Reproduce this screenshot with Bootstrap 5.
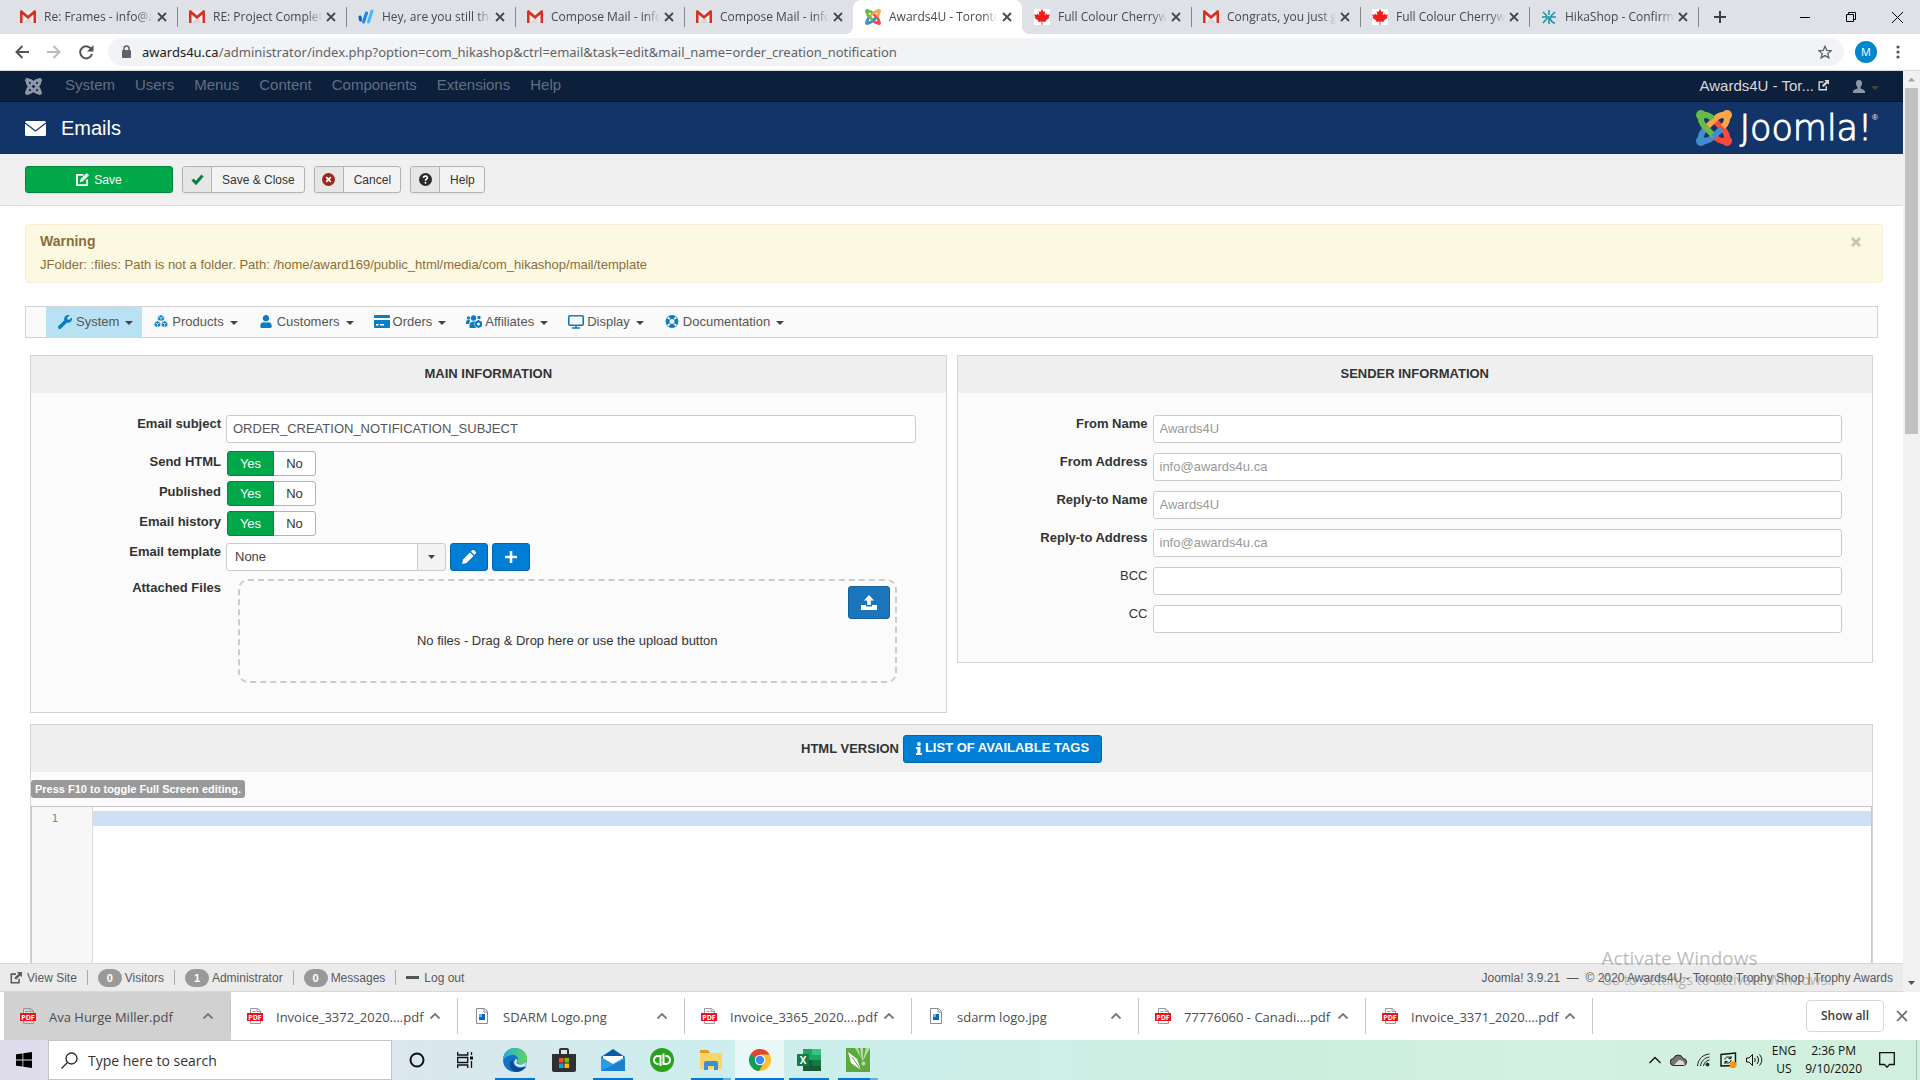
<!DOCTYPE html>
<html lang="en">
<head>
<meta charset="utf-8">
<meta name="viewport" content="width=device-width, initial-scale=1">
<title>Awards4U - Toronto Trophy Shop - Administration</title>
<link href="https://cdn.jsdelivr.net/npm/bootstrap@5.3.0/dist/css/bootstrap.min.css" rel="stylesheet">
<style>
body{height:100vh;font-family:"Liberation Sans",Arial,sans-serif;font-size:13px;line-height:18px;color:#333;background:#fff}
svg{display:block;flex:none}
a{text-decoration:none;color:inherit}
button{font-family:inherit}
.ui{font-family:"Open Sans","Noto Sans",sans-serif}
.plain{border:0;background:none;padding:0;color:inherit;display:flex;align-items:center;justify-content:center}
/* tab strip */
.tabstrip{height:34px;background:#dee1e6;padding-left:8px;font-size:12px;color:#45494d}
.tabitem{width:169px;height:34px;padding:0 8px 0 12px;position:relative}
.tabitem:not(.on):not(.pre)::after{content:"";position:absolute;right:-1px;top:7px;width:1px;height:20px;background:#84888c}
.tabitem.on{background:#fff;border-radius:8px 8px 0 0}
.tabitem.on::before,.tabitem.on::after{content:"";position:absolute;bottom:0;width:8px;height:8px}
.tabitem.on::before{left:-8px;background:radial-gradient(circle at 0 0,transparent 8px,#fff 8px)}
.tabitem.on::after{right:-8px;background:radial-gradient(circle at 100% 0,transparent 8px,#fff 8px)}
.tabname{margin-left:8px;flex:1;overflow:hidden;white-space:nowrap;line-height:34px;-webkit-mask-image:linear-gradient(90deg,#000 86%,transparent);mask-image:linear-gradient(90deg,#000 86%,transparent)}
.tabclose{width:14px;height:14px;margin-left:2px}
.wbtn{width:46px;height:30px;color:#000}
/* address bar */
.addrbar{height:37px;border-bottom:1px solid #d5d8dc;padding:0 11px 0 6px}
.navic{width:32px;height:32px}
.omni{height:28px;border-radius:14px;background:#f1f3f4;margin-left:6px;padding:0 12px;color:#5f6368}
.url{font-family:"Noto Sans","Open Sans",sans-serif;font-size:13px;line-height:28px;margin-left:10px}
.url b{font-weight:400;color:#202124}
.avatar{width:22px;height:22px;border-radius:50%;background:#0086d1;color:#fff;font-size:11px;margin:0 10px 0 11px}
.kebab{width:22px}
/* joomla bars */
.topbar{height:31px;background:#0c1f3b;border-bottom:1px solid #08162b;font-size:15px;color:#626f82;padding-left:25px;line-height:28px}
.topbar nav{margin-left:13px;padding-bottom:2px}
.topbar nav a{padding:0 10px}
.sitelink{color:#d9d9d9;padding-bottom:1px}
.hero{height:52px;background:#133468;color:#fff;padding:0 25px}
.hero h1{font-size:20px;line-height:28px;font-weight:400;margin:0 0 0 15px}
.brandtext{font-family:"DejaVu Sans",sans-serif;font-weight:200;font-size:35px;line-height:38px;-webkit-text-stroke:1px #fff}
.regmark{font-size:8px}
.subhead{height:52px;background:#f0f0f0;border-bottom:1px solid #dcdcdc;padding:12px 25px}
.jbtn{height:27px;border:1px solid #b3b3b3;border-radius:3px;background:#f3f3f3;color:#333;font-size:12px;line-height:26px;padding:0;display:flex;overflow:hidden;box-shadow:0 1px 2px rgba(0,0,0,.05)}
.jbtn i{width:29px;height:25px;background:#e6e6e6;border-right:1px solid #b3b3b3;display:flex;align-items:center;justify-content:center}
.jbtn span{padding:0 9px 0 10px}
.jsave{width:148px;background:#00a849;border-color:#008739;color:#fff;align-items:center;justify-content:center;gap:5px}
.page{padding:18px 20px 0 25px}
.jalert{background:#fcf9e2;border:1px solid #fbeed5;border-radius:4px;color:#8a6d3b;height:59px;padding:7px 20px 0 14px}
.jalert h4{font-size:14px;font-weight:700;line-height:18px;margin:0 0 6px}
.hkmenu{margin:23px 5px 0 0;height:32px;border:1px solid #d3d3d3;background:#fafafa;padding-left:20px;color:#555;line-height:28px}
.hkmenu a{display:flex;align-items:center;padding:0 9px 1px 11px;height:30px}
.hkmenu svg{color:#0b7dc1;margin-right:3px}
.hkmenu a.cur{background:#b9e1f4}
.hkmenu a::after,.car::after{content:"";border:4px solid transparent;border-top-color:#444;border-bottom:0;margin-left:6px;margin-top:3px}
.panels{padding:17px 10px 0 5px;gap:10px}
.hkpanel{border:1px solid #d3d3d3;background:#fbfbfb;border-radius:0;color:#333}
.hkpanel h2{background:#efefef;font-size:13px;font-weight:700;line-height:36px;height:37px;margin:0;text-align:center}
.fields{padding:22px 30px 29px 0}
.frow{display:flex;align-items:flex-start}
.flabel{width:190px;flex:none;text-align:right;font-weight:700;margin-right:5px;line-height:18px}
.fin{height:28px;flex:1;min-width:0;width:100%;border:1px solid #ccc;border-radius:3px;background:#fff;padding:0 6px 2px;font-size:13px;color:#555;line-height:18px}
.fin::placeholder{color:#999}
.yn{margin-left:1px}
.yn label.btn{font-size:13px;line-height:23px;height:25px;padding:0;border:1px solid #b3b3b3;background:#fff;color:#333;width:43px;border-radius:3px}
.yn .btn-check:checked+label.btn{background:#00a849;border-color:#008739;color:#fff;width:47px}
.fsel{width:220px;height:28px;appearance:none;border:1px solid #ccc;border-radius:3px;padding:0 8px;color:#444;font-size:13px;background:#fff url("data:image/svg+xml,%3Csvg xmlns='http://www.w3.org/2000/svg' width='28' height='26'%3E%3Crect width='28' height='26' fill='%23f3f3f3'/%3E%3Crect width='1' height='26' fill='%23ccc'/%3E%3Cpath d='M11 11h7l-3.500 4z' fill='%23444'/%3E%3C/svg%3E") right center no-repeat}
.bluebtn{background:#007dd4;border:1px solid #0067ae;border-radius:3px;color:#fff;height:28px;width:38px;padding:0;display:flex;align-items:center;justify-content:center}
.bluebtn.tags{width:199px;display:inline-flex;font-size:13px;font-weight:700;gap:3px;vertical-align:middle;padding-bottom:1px}
.dropz{flex:1;margin:0 19px 0 12px;height:104px;border:2px dashed #ccc;border-radius:10px;padding:5px;text-align:center}
.dropz p{margin:13px 0 0}
.upbtn{background:#1b75bb;border-color:#16619b;width:42px;height:33px;margin-left:auto}
.key{background:#999;color:#fff;font-weight:700;font-size:11px;line-height:18px;padding:0 4px;border-radius:3px}
.editor{border:1px solid #c8c8c8;border-bottom:0;background:#fff;font-family:"DejaVu Sans Mono",monospace;font-size:11px}
.gutter{width:61px;background:#f7f7f7;border-right:1px solid #ddd;color:#888;padding:4px 34px 0 0;text-align:right;line-height:16px}
.curline{height:15px;background:#cfdff5;margin-top:4px}
.statusbar{height:29px;background:#ebebeb;border:1px solid #d8d8d8;border-width:1px 0;font-size:12px;color:#5a5a5a;padding:0 10px}
.statusbar svg{margin-right:5px}
.statusbar .sep{width:1px;height:15px;background:#aaa;margin:0 10px}
.cnt{background:#999;color:#fff;font-weight:700;font-size:11px;width:24px;height:18px;line-height:18px;border-radius:9px;text-align:center;margin-right:3px}
.scrollb{width:17px;background:#f1f1f1}
.thumb{width:13px;height:346px;background:#c1c1c1}
/* downloads + taskbar */
.dlbar{height:48px;padding-left:4px;background:#fff}
.dl{width:227px;height:48px;padding:0 17px 0 16px;position:relative;color:#4a4d51;font-size:13px}
.dl::after{content:"";position:absolute;right:0;top:6px;width:1px;height:36px;background:#c3c6c9}
.dl.hot{background:#d1d1d1}
.dl a{margin-left:13px;padding-top:2px;flex:1;white-space:nowrap}
.showall{width:78px;height:32px;border:1px solid #d6d9dc;border-radius:4px;background:#fff;font-size:12px;color:#3c4043;font-weight:600;padding:0}
.taskbar{height:40px;background:linear-gradient(90deg,#dfdcec 0,#dce6ee 20%,#cceeed 38%,#cdefe6 55%,#cdeedd 68%,#d3f1e1 80%,#d1efdd 100%)}
.startbtn{width:48px}
.search{width:344px;border:1px solid #c4c4c4;background:#fff;padding-left:12px}
.search input{border:0;outline:0;font-size:14px;margin-left:10px;width:240px;padding:1px 0 0}
.search input::placeholder{color:#333;opacity:1}
.app{width:49px;height:40px;display:flex;align-items:center;justify-content:center;position:relative}
.app.run::after{content:"";position:absolute;bottom:0;left:5px;right:4px;height:2px;background:#0078d7}
.app.two::after{background:linear-gradient(90deg,#0078d7 80%,#66aee6 80%)}
.app.act{background:#e9f8f7}.app.act::after{left:0;right:0}
.tray{color:#111;font-size:12px;line-height:18px;text-align:center;gap:9px}
.deskedge{width:4px;height:40px;border-left:1px solid #a9bfb3;margin-left:11px}
.watermark{position:absolute;right:89px;bottom:90px;color:rgba(120,120,120,.5);z-index:5;pointer-events:none;white-space:nowrap}
.watermark p{margin:0}
.watermark .w1{font-size:19px;line-height:24px}.watermark .w2{font-size:14px;line-height:20px}
</style>
</head>
<body class="d-flex flex-column overflow-hidden position-relative">
<svg width="0" height="0" class="position-absolute">
<defs>
<symbol id="gm" viewBox="0 0 16 14"><path fill="#eee" d="M1 1h14v12H1z"/><path fill="#d9d9d9" d="M3 13l5-5 5 5z"/><path fill="#d93025" d="M0 1.500A1.500 1.500 0 0 1 1.500 0L8 5.500 14.500 0A1.500 1.500 0 0 1 16 1.500V13h-2.500V4.500L8 9 2.500 4.500V13H0z"/></symbol>
<symbol id="leaf" viewBox="0 0 16 16"><path fill="#fff" d="M0 0h16v16H0z"/><path fill="#f11c1c" d="M8 0l1.600 3 1.700-.8-.6 4 2-1.700.4 1.200L16 5.500l-1.200 2.600.8.700-4 3 .3 1.300-3.500-.5V16h-.8v-3.400l-3.500.5.3-1.300-4-3 .8-.7L0 5.500l2.900.2.4-1.200 2 1.700-.6-4 1.700.8z"/></symbol>
<symbol id="arm" viewBox="0 0 36 36"><circle cx="5" cy="5" r="5" fill="currentColor" stroke="none"/><path d="M5 5C11 4 14 6 17 9M5 5C4 11 6 14 9 17L18 26" fill="none" stroke="currentColor" stroke-width="6"/></symbol>
<symbol id="joo" viewBox="0 0 36 36"><use href="#arm" color="#418ece" transform="rotate(270 18 18)"/><use href="#arm" color="#f9493a" transform="rotate(180 18 18)"/><use href="#arm" color="#fba546" transform="rotate(90 18 18)"/><use href="#arm" color="#67bb46"/><path d="M26 19L17 27" stroke="#418ece" stroke-width="5.500"/></symbol>
<symbol id="joog" viewBox="0 0 36 36"><use href="#arm"/><use href="#arm" transform="rotate(90 18 18)"/><use href="#arm" transform="rotate(180 18 18)"/><use href="#arm" transform="rotate(270 18 18)"/></symbol>
<symbol id="x" viewBox="0 0 12 12"><path d="M2 2l8 8M10 2l-8 8" stroke="currentColor" stroke-width="1.800" fill="none"/></symbol>
<symbol id="up" viewBox="0 0 12 12"><path d="M1.500 8.500L6 4l4.500 4.500" stroke="currentColor" stroke-width="1.800" fill="none"/></symbol>
<symbol id="ext" viewBox="0 0 14 14"><path d="M7 2.500H1.500v10h9V8" fill="none" stroke="currentColor" stroke-width="1.800"/><path d="M8 0h6v6l-2-2-5 5-2-2 5-5z" fill="currentColor"/></symbol>
<symbol id="usr" viewBox="0 0 448 512"><path fill="currentColor" d="M224 256c70.700 0 128-57.300 128-128S294.700 0 224 0 96 57.300 96 128s57.300 128 128 128zm89.600 32h-16.700c-22.200 10.200-46.900 16-72.900 16s-50.600-5.800-72.900-16h-16.700C60.200 288 0 348.200 0 422.400V464c0 26.500 21.500 48 48 48h352c26.500 0 48-21.500 48-48v-41.600c0-74.200-60.200-134.400-134.400-134.400z"/></symbol>
<symbol id="pdf" viewBox="0 0 16 16"><path d="M3.500 8V.5h7L13.500 3v5M3.500 12v3.500h10V12M10 .5V3.500h3M5.500 3.500h3" fill="none" stroke="#999"/><path fill="#e5131d" d="M0 5h16v8H0z"/><text x="8" y="11.500" font-size="7" font-weight="700" font-family="Open Sans,sans-serif" fill="#fff" text-anchor="middle">PDF</text></symbol>
<symbol id="img" viewBox="0 0 16 16"><path d="M2.500.5h8l3 3v12h-11z" fill="#fff" stroke="#8b8b8b"/><path d="M10 .5v3.500h3.500" fill="none" stroke="#8b8b8b"/><path fill="#0a67c2" d="M5 6h6v6H5z"/><path fill="#5ab6f0" d="M5 6h3v3H5z"/></symbol>
</defs></svg>

<header class="ui flex-shrink-0">
<div class="tabstrip d-flex align-items-center">
<div class="tabitem d-flex align-items-center"><svg width="16" height="14"><use href="#gm"/></svg><a href="#" class="tabname">Re: Frames - info@aw</a><button class="plain tabclose" aria-label="Close tab"><svg width="12" height="12"><use href="#x"/></svg></button></div>
<div class="tabitem d-flex align-items-center"><svg width="16" height="14"><use href="#gm"/></svg><a href="#" class="tabname">RE: Project Complet</a><button class="plain tabclose" aria-label="Close tab"><svg width="12" height="12"><use href="#x"/></svg></button></div>
<div class="tabitem d-flex align-items-center"><svg width="16" height="16" viewBox="0 0 16 16" fill="none" stroke-linecap="round" stroke-width="3"><path d="M2 8l.5 3" stroke="#0d5fc0"/><path d="M8.500 4l-3 9" stroke="#1387f0"/><path d="M14 2l-3.500 11" stroke="#4db6ff"/></svg><a href="#" class="tabname">Hey, are you still the</a><button class="plain tabclose" aria-label="Close tab"><svg width="12" height="12"><use href="#x"/></svg></button></div>
<div class="tabitem d-flex align-items-center"><svg width="16" height="14"><use href="#gm"/></svg><a href="#" class="tabname">Compose Mail - info</a><button class="plain tabclose" aria-label="Close tab"><svg width="12" height="12"><use href="#x"/></svg></button></div>
<div class="tabitem pre d-flex align-items-center"><svg width="16" height="14"><use href="#gm"/></svg><a href="#" class="tabname">Compose Mail - info</a><button class="plain tabclose" aria-label="Close tab"><svg width="12" height="12"><use href="#x"/></svg></button></div>
<div class="tabitem on d-flex align-items-center"><svg width="16" height="16"><use href="#joo"/></svg><a href="#" class="tabname">Awards4U - Toronto</a><button class="plain tabclose" aria-label="Close tab"><svg width="12" height="12"><use href="#x"/></svg></button></div>
<div class="tabitem d-flex align-items-center"><svg width="16" height="16"><use href="#leaf"/></svg><a href="#" class="tabname">Full Colour Cherryw</a><button class="plain tabclose" aria-label="Close tab"><svg width="12" height="12"><use href="#x"/></svg></button></div>
<div class="tabitem d-flex align-items-center"><svg width="16" height="14"><use href="#gm"/></svg><a href="#" class="tabname">Congrats, you just g</a><button class="plain tabclose" aria-label="Close tab"><svg width="12" height="12"><use href="#x"/></svg></button></div>
<div class="tabitem d-flex align-items-center"><svg width="16" height="16"><use href="#leaf"/></svg><a href="#" class="tabname">Full Colour Cherryw</a><button class="plain tabclose" aria-label="Close tab"><svg width="12" height="12"><use href="#x"/></svg></button></div>
<div class="tabitem d-flex align-items-center"><svg width="16" height="16" viewBox="0 0 16 16" fill="none" stroke="#1793a5" stroke-width="1.500"><path d="M8 1v5M2 3l4 4M14 3l-4 4M1 8h14M6.500 9L2 14M8 9v6M9 9c1 3 2 5 5 5"/></svg><a href="#" class="tabname">HikaShop - Confirm</a><button class="plain tabclose" aria-label="Close tab"><svg width="12" height="12"><use href="#x"/></svg></button></div>
<button class="plain ms-3" aria-label="New tab"><svg width="12" height="12" viewBox="0 0 12 12"><path d="M6 0v12M0 6h12" stroke="#3c4043" stroke-width="2"/></svg></button>
<div class="d-flex ms-auto">
<button class="plain wbtn" aria-label="Minimize"><svg width="10" height="10"><path d="M0 5.500h10" stroke="#000"/></svg></button>
<button class="plain wbtn" aria-label="Restore"><svg width="10" height="10" fill="none" stroke="#000"><path d="M.5 2.500h7v7h-7zM2.500 2.500v-2h7v7h-2"/></svg></button>
<button class="plain wbtn" aria-label="Close"><svg width="11" height="11" stroke="#000"><path d="M0 0l11 11M11 0L0 11"/></svg></button>
</div></div>
<div class="addrbar d-flex align-items-center">
<button class="plain navic" aria-label="Back"><svg width="14" height="14" viewBox="0 0 14 14" fill="none" stroke="#505357" stroke-width="2"><path d="M14 7H1.500M7.500 1l-6 6 6 6"/></svg></button>
<button class="plain navic" aria-label="Forward"><svg width="14" height="14" viewBox="0 0 14 14" fill="none" stroke="#b9bcbf" stroke-width="2"><path d="M0 7h12.500M6.500 1l6 6-6 6"/></svg></button>
<button class="plain navic" aria-label="Reload"><svg width="15" height="15" viewBox="0 0 15 15"><path d="M12.500 4.500A6 6 0 1 0 13 9" fill="none" stroke="#505357" stroke-width="2"/><path d="M14.500 0v6.500H8z" fill="#505357"/></svg></button>
<div class="omni d-flex align-items-center flex-fill">
<svg width="12" height="14" viewBox="0 0 12 14"><rect x="2" y="5" width="9" height="8" rx="1" fill="#5f6368"/><path d="M4 5V3.500a2.500 2.500 0 0 1 5 0V5" fill="none" stroke="#5f6368" stroke-width="1.500"/></svg>
<a href="#" class="url"><b>awards4u.ca</b>/administrator/index.php?option=com_hikashop&amp;ctrl=email&amp;task=edit&amp;mail_name=order_creation_notification</a>
<svg class="ms-auto" width="14" height="14" viewBox="0 0 16 16" fill="none" stroke="#5f6368" stroke-width="1.500"><path d="M8 1.500l2 4.600 5 .4-3.800 3.300 1.200 4.900L8 12.100l-4.400 2.600 1.200-4.900L1 6.500l5-.4z"/></svg>
</div>
<button class="plain avatar" aria-label="Profile">M</button>
<button class="plain kebab" aria-label="Menu"><svg width="4" height="14" fill="#505357"><circle cx="2" cy="2" r="1.600"/><circle cx="2" cy="7" r="1.600"/><circle cx="2" cy="12" r="1.600"/></svg></button>
</div>
</header>

<div class="d-flex flex-fill overflow-hidden">
<main class="d-flex flex-column flex-fill overflow-hidden">
<div class="topbar d-flex align-items-center flex-shrink-0">
<a href="#" aria-label="Joomla"><svg width="17" height="17" color="#8d97a5"><use href="#joog"/></svg></a>
<nav class="d-flex"><a href="#">System</a><a href="#">Users</a><a href="#">Menus</a><a href="#">Content</a><a href="#">Components</a><a href="#">Extensions</a><a href="#">Help</a></nav>
<a href="#" class="sitelink ms-auto d-flex align-items-center">Awards4U - Tor...<svg class="ms-1" width="11" height="11"><use href="#ext"/></svg></a>
<a href="#" class="d-flex align-items-center car ms-4 me-4" aria-label="User menu"><svg width="12" height="13" viewBox="0 0 12 13" fill="#8d97a5"><path d="M6 0c2.500 0 3.300 2 3 4-.2 1.500-1 2.500-1.500 3v1.500c1 .8 4.500.8 4.500 3.500v1H0v-1c0-2.700 3.500-2.700 4.500-3.500V7C4 6.500 3.200 5.500 3 4c-.3-2 .5-4 3-4z"/></svg></a>
</div>
<div class="hero d-flex align-items-center flex-shrink-0">
<svg width="21" height="15" viewBox="0 0 21 15"><rect width="21" height="15" rx="1.500" fill="#fff"/><path d="M0 2l10.500 8L21 2" fill="none" stroke="#133468" stroke-width="1.200"/></svg>
<h1>Emails</h1>
<a href="#" class="ms-auto d-flex align-items-center" aria-label="Joomla!"><svg width="36" height="36"><use href="#joo"/></svg><span class="brandtext ms-2">Joomla!</span><span class="regmark align-self-start">®</span></a>
</div>
<div class="subhead d-flex flex-shrink-0" style="gap:9px">
<button class="jbtn jsave"><svg width="13" height="13" viewBox="0 0 14 14"><path d="M8 2H1v11h11V7" fill="none" stroke="#fff" stroke-width="2"/><path d="M11.500 0L14 2.500 7.500 9 4 10 5 6.500z" fill="#fff"/></svg>Save</button>
<button class="jbtn"><i><svg width="13" height="11" viewBox="0 0 13 11"><path d="M1.500 5.500l3.500 3.500 6.500-7.500" fill="none" stroke="#0f7d3d" stroke-width="3"/></svg></i><span>Save &amp; Close</span></button>
<button class="jbtn"><i><svg width="13" height="13" viewBox="0 0 14 14"><circle cx="7" cy="7" r="7" fill="#9d261d"/><path d="M4.500 4.500l5 5M9.500 4.500l-5 5" stroke="#fff" stroke-width="1.800"/></svg></i><span>Cancel</span></button>
<button class="jbtn"><i><svg width="13" height="13" viewBox="0 0 14 14"><circle cx="7" cy="7" r="7" fill="#2b2b2b"/><path d="M4.800 5.200C5 2.600 9.500 3 9 5.500 8.700 6.800 7 6.600 7 8.300" fill="none" stroke="#fff" stroke-width="1.800"/><circle cx="7" cy="10.600" r="1.100" fill="#fff"/></svg></i><span>Help</span></button>
</div>

<div class="page d-flex flex-column flex-fill overflow-hidden">
<div class="jalert d-flex justify-content-between flex-shrink-0" role="alert">
<div><h4>Warning</h4><div>JFolder: :files: Path is not a folder. Path: /home/award169/public_html/media/com_hikashop/mail/template</div></div>
<button class="plain align-self-start mt-1" aria-label="Close"><svg width="12" height="12" viewBox="0 0 12 12"><path d="M2 2l8 8M10 2l-8 8" stroke="#c9c6b6" stroke-width="3"/></svg></button>
</div>
<nav class="hkmenu d-flex flex-shrink-0">
<a href="#" class="cur"><svg width="16" height="14" viewBox="0 0 512 512"><path fill="currentColor" d="M507.730 109.100c-2.240-9.030-13.540-12.090-20.120-5.510l-74.360 74.360-67.880-11.310-11.310-67.880 74.360-74.360c6.620-6.620 3.430-17.900-5.660-20.160-47.380-11.740-99.550.91-136.580 37.930-39.640 39.640-50.550 97.100-34.050 147.200L18.740 402.760c-24.990 24.990-24.990 65.510 0 90.500 24.990 24.990 65.510 24.990 90.500 0l213.210-213.210c50.120 16.710 107.470 5.680 147.370-34.220 37.070-37.070 49.700-89.320 37.910-136.730z"/></svg>System</a>
<a href="#"><svg width="16" height="15" viewBox="0 0 16 14" fill="#0b7dc1" stroke="#fafafa" stroke-width=".7"><path d="M8 .3l3.300 1.500v3.600L8 7 4.700 5.400V1.800z"/><path d="M4.500 6.300l3.300 1.500v3.700l-3.300 1.600-3.300-1.600V7.800zM11.500 6.300l3.300 1.500v3.700l-3.300 1.600-3.300-1.600V7.800z"/><path d="M4.700 1.900L8 3.400l3.300-1.500M8 3.400V7M1.200 7.900l3.300 1.500 3.300-1.500M4.500 9.400v3.500M8.200 7.900l3.300 1.500 3.300-1.500M11.500 9.400v3.500" fill="none"/></svg>Products</a>
<a href="#"><svg width="16" height="13"><use href="#usr"/></svg>Customers</a>
<a href="#"><svg width="16" height="13" viewBox="0 0 16 13" fill="currentColor"><path d="M1 0h14q1 0 1 1v2H0V1q0-1 1-1zM0 5h16v7q0 1-1 1H1q-1 0-1-1z"/><path d="M2 9h2.500v1.500H2zM6 9h4v1.500H6z" fill="#fff"/></svg>Orders</a>
<a href="#"><svg width="16" height="13" viewBox="0 0 16 13" fill="currentColor"><circle cx="2.500" cy="3" r="1.700"/><circle cx="7.500" cy="3" r="2.700"/><circle cx="13" cy="2.500" r="1.700"/><path d="M0 9V7q0-2 2-2h1.500L4 6 3 9zM3.500 13v-2.500q0-3.500 3.500-4h2L8.500 8v3l2 2z"/><circle cx="12.500" cy="9" r="2.500" fill="none" stroke="currentColor" stroke-width="2"/><path d="M12.500 5v1.500M12.500 11.500V13M8.800 7l1.300.8M15 10.300l1 .6M8.800 11l1.300-.8M15 7.700l1-.6" stroke="currentColor" stroke-width="1.400"/></svg>Affiliates</a>
<a href="#"><svg width="16" height="14" viewBox="0 0 16 14" fill="none" stroke="currentColor" stroke-width="1.600"><rect x=".8" y=".8" width="14.400" height="9.400" rx="1"/><path d="M8 10v3M4 13h8"/></svg>Display</a>
<a href="#"><svg width="16" height="13" viewBox="0 0 14 14"><circle cx="7" cy="7" r="4.800" fill="none" stroke="currentColor" stroke-width="4.200"/><path d="M2.500 2.500l2 2M11.500 2.500l-2 2M2.500 11.500l2-2M11.500 11.500l-2-2" stroke="#fafafa" stroke-width="2"/></svg>Documentation</a>
</nav>

<div class="panels d-flex align-items-start flex-shrink-0">
<section class="hkpanel card col">
<h2>MAIN INFORMATION</h2>
<div class="fields">
<div class="frow mb-2"><label class="flabel" for="subj">Email subject</label><input id="subj" class="fin" value="ORDER_CREATION_NOTIFICATION_SUBJECT"></div>
<div class="frow" style="margin-bottom:5px"><span class="flabel pt-1" style="line-height:14px">Send HTML</span><div class="btn-group yn" role="group" aria-label="Send HTML"><input type="radio" class="btn-check" name="a" id="a1" checked><label class="btn" for="a1">Yes</label><input type="radio" class="btn-check" name="a" id="a0"><label class="btn" for="a0">No</label></div></div>
<div class="frow" style="margin-bottom:5px"><span class="flabel pt-1" style="line-height:14px">Published</span><div class="btn-group yn" role="group" aria-label="Published"><input type="radio" class="btn-check" name="b" id="b1" checked><label class="btn" for="b1">Yes</label><input type="radio" class="btn-check" name="b" id="b0"><label class="btn" for="b0">No</label></div></div>
<div class="frow" style="margin-bottom:7px"><span class="flabel pt-1" style="line-height:14px">Email history</span><div class="btn-group yn" role="group" aria-label="Email history"><input type="radio" class="btn-check" name="c" id="c1" checked><label class="btn" for="c1">Yes</label><input type="radio" class="btn-check" name="c" id="c0"><label class="btn" for="c0">No</label></div></div>
<div class="frow mb-2"><label class="flabel" for="tpl">Email template</label><select id="tpl" class="fsel"><option>None</option></select>
<button class="bluebtn ms-1" aria-label="Edit"><svg width="14" height="14" viewBox="0 0 14 14" fill="#fff"><path d="M0 14l1-4.500L8 2.500 11.500 6l-7 7zM9 1.500L10.500 0Q11.500-.3 13 1t.8 2.500L12.500 5z"/></svg></button>
<button class="bluebtn ms-1" aria-label="Add"><svg width="12" height="12" viewBox="0 0 12 12"><path d="M6 0v12M0 6h12" stroke="#fff" stroke-width="2.600"/></svg></button></div>
<div class="frow"><span class="flabel">Attached Files</span><div class="dropz"><button class="bluebtn upbtn" aria-label="Upload"><svg width="16" height="15" viewBox="0 0 16 15" fill="#fff"><path d="M8 0l5 5.500H9.800V10H6.200V5.500H3z"/><path d="M0 10h5v1.500h6V10h5v5H0z"/></svg></button><p>No files - Drag &amp; Drop here or use the upload button</p></div></div>
</div></section>
<section class="hkpanel card col">
<h2>SENDER INFORMATION</h2>
<div class="fields d-flex flex-column" style="gap:10px">
<div class="frow"><label class="flabel" for="f1">From Name</label><input id="f1" class="fin" placeholder="Awards4U"></div>
<div class="frow"><label class="flabel" for="f2">From Address</label><input id="f2" class="fin" placeholder="info@awards4u.ca"></div>
<div class="frow"><label class="flabel" for="f3">Reply-to Name</label><input id="f3" class="fin" placeholder="Awards4U"></div>
<div class="frow"><label class="flabel" for="f4">Reply-to Address</label><input id="f4" class="fin" placeholder="info@awards4u.ca"></div>
<div class="frow"><label class="flabel fw-normal" for="f5">BCC</label><input id="f5" class="fin"></div>
<div class="frow"><label class="flabel fw-normal" for="f6">CC</label><input id="f6" class="fin"></div>
</div></section>
</div>

<section class="hkpanel card flex-fill border-bottom-0" style="margin:11px 10px 0 5px">
<h2 class="d-flex align-items-center justify-content-center flex-shrink-0" style="height:47px;gap:4px"><span>HTML VERSION</span><button class="bluebtn tags"><svg width="6" height="13" viewBox="0 0 6 13" fill="#fff"><circle cx="3" cy="2" r="1.900"/><path d="M0 5h4.500v6H6v2H0v-2h1.300V7H0z"/></svg>LIST OF AVAILABLE TAGS</button></h2>
<div class="py-2"><span class="key d-table">Press F10 to toggle Full Screen editing.</span></div>
<div class="editor d-flex flex-fill"><div class="gutter">1</div><div class="flex-fill"><div class="curline"></div></div></div>
</section>
</div>

<footer class="statusbar d-flex align-items-center flex-shrink-0">
<a href="#" class="d-flex align-items-center"><svg width="12" height="12"><use href="#ext"/></svg>View Site</a><span class="sep"></span>
<span class="cnt">0</span>Visitors<span class="sep"></span><span class="cnt">1</span>Administrator<span class="sep"></span><span class="cnt">0</span><a href="#">Messages</a><span class="sep"></span>
<a href="#" class="d-flex align-items-center"><svg width="13" height="3"><path fill="#555" d="M0 0h13v3H0z"/></svg>Log out</a>
<span class="ms-auto">Joomla! 3.9.21 &nbsp;—&nbsp; © 2020 Awards4U - Toronto Trophy Shop | Trophy Awards</span>
</footer>
</main>
<div class="scrollb d-flex flex-column align-items-center flex-shrink-0"><svg width="17" height="17"><path d="M5 10.500h7L8.500 6.500z" fill="#a3a3a3"/></svg><div class="thumb"></div><svg class="mt-auto" width="17" height="17"><path d="M5 6h7l-3.500 4z" fill="#505050"/></svg></div>
</div>

<div class="dlbar ui d-flex align-items-center flex-shrink-0">
<div class="dl hot d-flex align-items-center"><svg width="16" height="16"><use href="#pdf"/></svg><a href="#">Ava Hurge Miller.pdf</a><button class="plain" aria-label="More"><svg width="12" height="12" color="#777"><use href="#up"/></svg></button></div>
<div class="dl d-flex align-items-center"><svg width="16" height="16"><use href="#pdf"/></svg><a href="#">Invoice_3372_2020....pdf</a><button class="plain" aria-label="More"><svg width="12" height="12" color="#777"><use href="#up"/></svg></button></div>
<div class="dl d-flex align-items-center"><svg width="16" height="16"><use href="#img"/></svg><a href="#">SDARM Logo.png</a><button class="plain" aria-label="More"><svg width="12" height="12" color="#777"><use href="#up"/></svg></button></div>
<div class="dl d-flex align-items-center"><svg width="16" height="16"><use href="#pdf"/></svg><a href="#">Invoice_3365_2020....pdf</a><button class="plain" aria-label="More"><svg width="12" height="12" color="#777"><use href="#up"/></svg></button></div>
<div class="dl d-flex align-items-center"><svg width="16" height="16"><use href="#img"/></svg><a href="#">sdarm logo.jpg</a><button class="plain" aria-label="More"><svg width="12" height="12" color="#777"><use href="#up"/></svg></button></div>
<div class="dl d-flex align-items-center"><svg width="16" height="16"><use href="#pdf"/></svg><a href="#">77776060 - Canadi....pdf</a><button class="plain" aria-label="More"><svg width="12" height="12" color="#777"><use href="#up"/></svg></button></div>
<div class="dl d-flex align-items-center"><svg width="16" height="16"><use href="#pdf"/></svg><a href="#">Invoice_3371_2020....pdf</a><button class="plain" aria-label="More"><svg width="12" height="12" color="#777"><use href="#up"/></svg></button></div>
<button class="showall ms-auto">Show all</button><button class="plain mx-2 px-1" aria-label="Close downloads"><svg width="12" height="12" viewBox="0 0 12 12"><path d="M1 1l10 10M11 1L1 11" stroke="#5f6368" stroke-width="1.600"/></svg></button>
</div>

<div class="taskbar ui d-flex flex-shrink-0">
<button class="plain startbtn" aria-label="Start"><svg width="16" height="16" viewBox="0 0 16 16"><path d="M0 2.300L6.500 1.400v6.200H0zM7.300 1.300L16 0v7.600H7.300zM0 8.400h6.500v6.200L0 13.700zM7.300 8.400H16V16l-8.700-1.300z"/></svg></button>
<label class="search d-flex align-items-center"><svg width="17" height="17" viewBox="0 0 17 17" fill="none" stroke="#222" stroke-width="1.300"><circle cx="10.500" cy="6.500" r="5.500"/><path d="M6.500 10.500L.5 16.500"/></svg><input type="text" placeholder="Type here to search" aria-label="Search"></label>
<a class="app" href="#" aria-label="Cortana"><svg width="16" height="16"><circle cx="8" cy="8" r="6.500" fill="none" stroke="#111" stroke-width="2"/></svg></a>
<a class="app" href="#" aria-label="Task View"><svg width="17" height="16" fill="none" stroke="#111" stroke-width="1.300"><path d="M.7 0v3h10V0M.7 16v-3h10v3M.7 5.500h10v5H.7zM14.500 0v3M14.500 9v7"/><path d="M13 6h3" stroke-width="3"/></svg></a>
<a class="app run" href="#" aria-label="Edge"><svg width="24" height="24" viewBox="0 0 24 24"><defs><linearGradient id="e1"><stop offset="0" stop-color="#2aa6e0"/><stop offset="1" stop-color="#5fd65a"/></linearGradient></defs><circle cx="12" cy="12" r="12" fill="#1173c6"/><path d="M0 11C1 4 6 0 12 0c7 0 12 5 12 10 0 4-3 6-6 6-2 0-4-.5-4-2 0-1 1-1.500 1-3 0-2-2-4-5-4-5 0-9 3-10 6z" fill="url(#e1)"/><path d="M10 12c-1 5 4 9 9 8 2-.4 3.500-1.500 4-1-2 3-6 5-10 5-4-1-7-5-6-9 .4-2 2-3 3-3z" fill="#0b4a92"/><path d="M14 11c1 2-1.500 3 0 4.500 2.500 2 8 .8 9.700-2.500-.3 2-1 3.500-1.700 5-3 2-9 1.500-10.500-2-.8-2 .5-5 2.500-5z" fill="#d7e9ee"/></svg></a>
<a class="app" href="#" aria-label="Store"><svg width="24" height="24" viewBox="0 0 24 24"><path d="M8 6V2q0-1 1-1h6q1 0 1 1v4" fill="none" stroke="#333" stroke-width="2"/><path d="M0 6h24v16q0 2-2 2H2q-2 0-2-2z" fill="#303030"/><path d="M7 10h4.500v4.500H7z" fill="#f25022"/><path d="M12.500 10H17v4.500h-4.500z" fill="#7fba00"/><path d="M7 15.500h4.500V20H7z" fill="#00a4ef"/><path d="M12.500 15.500H17V20h-4.500z" fill="#ffb900"/></svg></a>
<a class="app run" href="#" aria-label="Mail"><svg width="24" height="22" viewBox="0 0 24 22"><path d="M0 8L12 0l12 8v14H0z" fill="#0a5ca8"/><path d="M2 7h20v8H2z" fill="#fff"/><path d="M0 8l12 7 12-7v14H0z" fill="#2d9be6"/><path d="M0 22l24-12v12z" fill="#1b7fd0"/></svg></a>
<a class="app" href="#" aria-label="QuickBooks"><svg width="24" height="24" viewBox="0 0 24 24"><circle cx="12" cy="12" r="12" fill="#2ca01c"/><g fill="none" stroke="#fff" stroke-width="2"><path d="M10.500 18V8H8a3.500 3.500 0 0 0 0 8h.5M13.500 5.500V16H16a3.500 3.500 0 0 0 0-8h-.5"/></g></svg></a>
<a class="app run two" href="#" aria-label="File Explorer"><svg width="22" height="20" viewBox="0 0 22 20"><path d="M0 0h8l2 3H0z" fill="#e69b1a"/><path d="M0 3h22v16H0z" fill="#fcd467"/><path d="M4 20v-7q0-2 2-2h10q2 0 2 2v7h-4v-4H8v4z" fill="#3a8fd8"/></svg></a>
<a class="app run act" href="#" aria-label="Chrome"><svg width="24" height="24" viewBox="0 0 24 24"><circle cx="12" cy="12" r="11" fill="#fbc02d"/><path d="M12 12L2.500 6.500A11 11 0 0 1 21.500 6.500H12z" fill="#db4437"/><path d="M12 12L2.500 6.500A11 11 0 0 0 11 23l5-8.500z" fill="#0f9d58"/><circle cx="12" cy="12" r="5.200" fill="#fff"/><circle cx="12" cy="12" r="4.200" fill="#4285f4"/></svg></a>
<a class="app run" href="#" aria-label="Excel"><svg width="24" height="22" viewBox="0 0 24 22"><path d="M6 0h18v22H6z" fill="#21a366"/><path d="M15 0h9v6h-9z" fill="#33c481"/><path d="M6 11h9v11H6z" fill="#185c37"/><path d="M15 11h9v6h-9z" fill="#107c41"/><path d="M15 17h9v5h-9z" fill="#185c37"/><rect y="5" width="12" height="12" rx="1" fill="#107c41"/><text x="6" y="14.500" font-size="10" font-weight="700" fill="#fff" text-anchor="middle" font-family="Open Sans,sans-serif">X</text></svg></a>
<a class="app run two" href="#" aria-label="CorelDRAW"><svg width="24" height="24" viewBox="0 0 24 24"><path d="M0 0h24v24H0z" fill="#5daa3c"/><path d="M9 0l8 13L24 0h-4l-3 12L17 0h-3l2 12L12 0z" fill="#b7dca6"/><path d="M2 4l9 7 4 11-10-7z" fill="#fff"/><path d="M6 9l9 13" stroke="#5daa3c"/><circle cx="17.500" cy="15.500" r="2" fill="#b7dca6"/></svg></a>

<div class="tray d-flex align-items-center ms-auto">
<svg width="12" height="8"><path d="M.5 7L6 1.500 11.500 7" fill="none" stroke="#111" stroke-width="1.300"/></svg>
<svg width="17" height="12" viewBox="0 0 17 12"><path d="M4 11.500a3.500 3.500 0 0 1-.5-7 5 5 0 0 1 9.500 0 3.500 3.500 0 0 1 0 7z" fill="#777" stroke="#222"/><path d="M4 11l5-5 4 1 2 4z" fill="#ddd"/></svg>
<svg width="15" height="14" viewBox="-1 0 15 14" fill="none" stroke="#222"><path d="M.5 13C1 6 6 1.500 12.500 1M3.500 13C4 8.500 7.500 4.500 12.500 4M6.500 13c.5-3 2.500-5.500 6-6"/><circle cx="10.500" cy="11.500" r="1.500" fill="#222"/></svg>
<svg width="17" height="16" viewBox="0 0 17 16" fill="none" stroke="#111"><path d="M1 2.500L15.500 1v12.500L1 14z" stroke-width="1.400"/><path d="M5 7.500C5 5 9 4 11 6M11 4v2.500H8.500M11 8c0 3-4 4-6 2M5 12V9.500h2.500"/><circle cx="13" cy="13" r="3.400" fill="#ff9800" stroke="none"/></svg>
<svg width="17" height="14" viewBox="0 0 17 14" fill="none" stroke="#111"><path d="M.5 5H3l3.500-3.500v11L3 9H.5zM8.500 5c1 1.200 1 2.800 0 4M11 3c2 2.500 2 5.500 0 8M13.500 1.500c3 3.500 3 7.500 0 11"/></svg>
<div>ENG<br>US</div>
<div>2:36 PM<br>9/10/2020</div>
<svg class="mx-2" width="16" height="16" viewBox="0 0 16 16" fill="none" stroke="#111" stroke-width="1.300"><path d="M.7.7h14.600v11.800h-4.800L8 15.200l-2.500-2.700H.7z"/></svg>
<span class="deskedge ms-1"></span>
</div></div>

<div class="watermark ui"><p class="w1">Activate Windows</p><p class="w2">Go to Settings to activate Windows.</p></div>
<script src="https://cdn.jsdelivr.net/npm/bootstrap@5.3.0/dist/js/bootstrap.bundle.min.js"></script>
</body>
</html>
